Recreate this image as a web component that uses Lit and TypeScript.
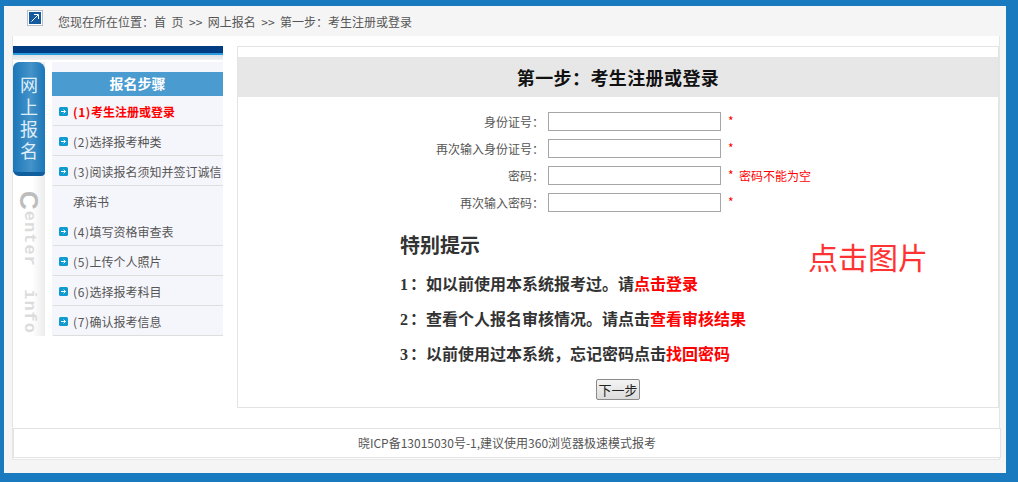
import { LitElement, html, css, svg } from "lit";
import { customElement } from "lit/decorators.js";

const STEPS: { n?: string; t: string; active?: boolean; noline?: boolean }[] = [
  { n: "(1)", t: "考生注册或登录", active: true },
  { n: "(2)", t: "选择报考种类" },
  { n: "(3)", t: "阅读报名须知并签订诚信" },
  { t: "承诺书", noline: true },
  { n: "(4)", t: "填写资格审查表" },
  { n: "(5)", t: "上传个人照片" },
  { n: "(6)", t: "选择报考科目" },
  { n: "(7)", t: "确认报考信息" },
];

const FIELDS: { label: string; msg?: string }[] = [
  { label: "身份证号：" },
  { label: "再次输入身份证号：" },
  { label: "密码：", msg: "密码不能为空" },
  { label: "再次输入密码：" },
];

@customElement("app-root")
export class AppRoot extends LitElement {
  static styles = css`
    :host {
      display: block;
      width: 1018px;
      height: 482px;
      box-sizing: border-box;
      padding: 6px 12px 9px 4px;
      background: #1a7abf;
      font-family: "Microsoft YaHei", "Noto Sans CJK SC", sans-serif;
      font-size: 12px;
      color: #444;
      overflow: hidden;
    }
    .frame {
      height: 467px;
      background: #f5f5f5;
      display: flex;
      flex-direction: column;
      position: relative;
    }
    .crumb {
      height: 30px;
      display: flex;
      align-items: flex-start;
      padding-left: 23px;
      flex: none;
    }
    .crumb svg { margin-top: 4px; display: block; flex: none; }
    .crumb span { margin: 8px 0 0 15px; line-height: 16px; color: #555; word-spacing: 2.8px; }
    .content {
      margin: 0 6px 0 8px;
      height: 424px;
      background: #fff;
      padding-top: 10px;
      box-sizing: border-box;
      border: 1px solid #e6e6e6;
      border-top: 0;
      display: flex;
      flex: none;
    }
    .side { width: 210px; flex: none; }
    .band {
      height: 9px;
      background: linear-gradient(#003c82 0 7px, #2b9be0 7px 9px);
    }
    .band2 { height: 5px; background: linear-gradient(#dbe2e6, #eef1f3); }
    .sidebody { display: flex; height: 276px; padding-top: 2px; box-sizing: border-box; }
    .tabs { width: 32px; flex: none; display: flex; flex-direction: column; background: linear-gradient(90deg, #fff 60%, #ececec); }
    .tab {
      height: 114px;
      flex: none;
      box-sizing: border-box;
      background: linear-gradient(90deg, #1b76b8, #4593c9 55%, #1b76b8);
      border-bottom: 4px solid #0f5f9e;
      border-radius: 6px 8px 4px 6px;
      color: #dfeefa;
      font-size: 18px;
      display: flex;
      justify-content: center;
      padding-top: 14px;
    }
    .tab span {
      writing-mode: vertical-rl;
      text-orientation: upright;
      letter-spacing: 4px;
      line-height: 32px;
      white-space: nowrap;
    }
    .vert {
      flex: 1;
      overflow: hidden;
      padding: 15px 0 0 6px;
    }
    .vert span {
      display: block;
      writing-mode: vertical-rl;
      font-family: "Liberation Mono", monospace;
      font-weight: bold;
      font-size: 17px;
      letter-spacing: 1px;
      white-space: pre;
      color: #dcdcdc;
      line-height: 20px;
    }
    .vert b { font-family: "Liberation Sans", sans-serif; font-size: 26px; color: #bdbdbd; }
    .menu {
      margin-left: 7px;
      flex: 1;
      height: 274px;
      padding-top: 10px;
      box-sizing: border-box;
      background: #f5f6fb;
      display: flex;
      flex-direction: column;
    }
    .menuhd {
      height: 24px;
      flex: none;
      background: #4a9bd0;
      color: #fff;
      font-weight: bold;
      font-size: 14px;
      line-height: 23px;
      text-align: center;
    }
    .step {
      height: 30px;
      flex: none;
      box-sizing: border-box;
      border-bottom: 1px solid #dedede;
      margin-left: 1px;
      display: flex;
      align-items: center;
      padding: 1px 0 0 6px;
      white-space: nowrap;
      overflow: hidden;
      color: #555;
    }
    .step.noline { border-bottom-color: transparent; }
    .step.active { color: #f00; font-weight: bold; }
    .step svg { flex: none; margin-right: 5px; }
    .step .txt { margin-left: 14px; }
    .step svg + .txt { margin-left: 0; }
    .step i { font-style: normal; letter-spacing: 0.6px; }
    .main {
      margin-left: 14px;
      width: 762px;
      height: 362px;
      box-sizing: border-box;
      border: 1px solid #e3e3e3;
      padding-top: 10px;
      position: relative;
      flex: none;
    }
    .title {
      height: 40px;
      background: #e7e7e7;
      color: #111;
      font-size: 18px;
      letter-spacing: 0.4px;
      font-weight: bold;
      line-height: 40px;
      text-align: center;
    }
    .form { padding-top: 14px; display: flex; flex-direction: column; gap: 7px; }
    .row { display: flex; align-items: center; height: 20px; }
    .row label { width: 310px; flex: none; text-align: right; color: #555; padding-right: 4px; box-sizing: border-box; }
    .row .in {
      width: 173px;
      height: 19px;
      box-sizing: border-box;
      border: 1px solid #a6a6a6;
      background: #fff;
      padding: 0;
      margin: 0;
      flex: none;
    }
    .row .star { margin: 0 0 2px 7px; color: #f00; width: 11px; flex: none; }
    .row .msg { color: #f00; }
    .notes { margin-left: 162px; color: #333; font-weight: bold; font-family: "Liberation Serif", "Noto Sans CJK SC", serif; }
    .notes h3 { margin: 19px 0 0; font-size: 20px; line-height: 28px; font-weight: bold; font-family: "Noto Sans CJK SC", sans-serif; }
    .notes p { margin: 0; font-size: 16px; line-height: 24px; height: 35px; white-space: nowrap; }
    .notes .p1 { margin-top: 14px; }
    .notes em { font-style: normal; color: #f00; }
    .notes i { font-style: normal; margin-right: 2px; }
    .btnrow { display: flex; justify-content: center; margin-top: 1px; }
    .btn {
      width: 44px;
      height: 21px;
      box-sizing: border-box;
      padding: 0;
      border: 1px solid #8a8a8a;
      border-radius: 2px;
      background: linear-gradient(#f4f4f4, #dcdcdc);
      font: 13px "Noto Sans CJK SC", sans-serif;
      color: #222;
      line-height: 17px;
    }
    .click {
      position: absolute;
      left: 570px;
      top: 191px;
      font-size: 30px;
      line-height: 36px;
      color: #f33;
    }
    .foot {
      position: absolute;
      left: 9px;
      top: 422px;
      width: 988px;
      height: 30px;
      box-sizing: border-box;
      background: #fff;
      border: 1px solid #e3e3e3;
      text-align: center;
      line-height: 28px;
      color: #555;
    }
  `;

  private arrow() {
    return html`<svg width="9" height="9" viewBox="0 0 9 9">
      <rect width="9" height="9" rx="1.5" fill="#0f9ad0"></rect>
      ${svg`<path d="M2 4.5H6.4M4.6 2.7L6.5 4.5L4.6 6.3" fill="none" stroke="#fff" stroke-width="1"></path>`}
    </svg>`;
  }

  render() {
    return html`<div class="frame">
      <div class="crumb">
        <svg width="16" height="16" viewBox="0 0 16 16">
          <rect x="0.5" y="0.5" width="15" height="15" fill="#fff" stroke="#b4bfca"></rect>
          <rect x="2" y="2" width="12" height="12" fill="#155a9c"></rect>
          <path d="M4.5 11.5L11 5M7 4.5H11.5V9" fill="none" stroke="#fff" stroke-width="1"></path>
        </svg>
        <span>您现在所在位置：首 页 &gt;&gt; 网上报名 &gt;&gt; 第一步：考生注册或登录</span>
      </div>
      <div class="content">
        <div class="side">
          <div class="band"></div>
          <div class="band2"></div>
          <div class="sidebody">
            <div class="tabs">
              <div class="tab"><span>网上报名</span></div>
              <div class="vert"><span><b>C</b>enter  infor</span></div>
            </div>
            <div class="menu">
              <div class="menuhd">报名步骤</div>
              ${STEPS.map(
                (s) => html`<div class="step ${s.active ? "active" : ""} ${s.noline ? "noline" : ""}">
                  ${s.n ? this.arrow() : ""}<span class="txt">${s.n ? html`<i>${s.n}</i>` : ""}${s.t}</span>
                </div>`
              )}
            </div>
          </div>
        </div>
        <div class="main">
          <div class="title">第一步：考生注册或登录</div>
          <div class="form">
            ${FIELDS.map(
              (f) => html`<div class="row">
                <label>${f.label}</label>
                <input class="in" type="text" />
                <span class="star">*</span>
                ${f.msg ? html`<span class="msg">${f.msg}</span>` : ""}
              </div>`
            )}
          </div>
          <div class="notes">
            <h3>特别提示</h3>
            <p class="p1"><i>1</i>：如以前使用本系统报考过。请<em>点击登录</em></p>
            <p><i>2</i>：查看个人报名审核情况。请点击<em>查看审核结果</em></p>
            <p><i>3</i>：以前使用过本系统，忘记密码点击<em>找回密码</em></p>
          </div>
          <div class="btnrow"><button class="btn">下一步</button></div>
          <div class="click">点击图片</div>
        </div>
      </div>
      <div class="foot">晓ICP备13015030号-1,建议使用360浏览器极速模式报考</div>
    </div>`;
  }
}
